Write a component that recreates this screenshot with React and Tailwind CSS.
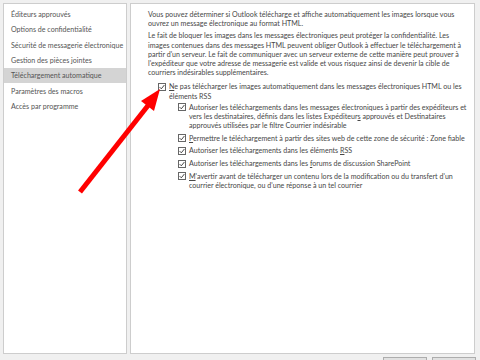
import React from "react";

const U = ({ children }) => <span className="underline underline-offset-[1px]">{children}</span>;

function Check() {
  return (
    <span className="mt-[0.6px] flex h-[8px] w-[8px] shrink-0 items-center justify-center border border-[#666] bg-white">
      <svg width="6" height="6" viewBox="0 0 6 6">
        <path d="M0.6 3.1 L2.3 4.8 L5.4 1" fill="none" stroke="#333" strokeWidth="0.9" />
      </svg>
    </span>
  );
}

function Item({ children }) {
  return (
    <div className="flex items-start gap-[3px]">
      <Check />
      <div className="whitespace-nowrap">{children}</div>
    </div>
  );
}

export default function App() {
  const nav = [
    "Éditeurs approuvés",
    "Options de confidentialité",
    "Sécurité de messagerie électronique",
    "Gestion des pièces jointes",
    "Téléchargement automatique",
    "Paramètres des macros",
    "Accès par programme",
  ];
  return (
    <div
      className="relative h-[360px] w-[480px] overflow-hidden bg-[#f0f0f0] text-[7.1px] leading-[9.2px] text-[#474747]"
      style={{ fontFamily: "Lato, 'Noto Sans', sans-serif" }}
    >
      <div className="flex h-[354px] gap-[3px] pl-[3px] pr-[5px] pt-[3px]">
        <div className="flex w-[124px] flex-col border border-[#cdcdcd] bg-white pt-[3px]">
          {nav.map((n, i) => (
            <div
              key={n}
              className={
                "flex h-[15.3px] items-center whitespace-nowrap pl-[7px] text-[#555] " +
                (i === 4 ? "bg-[#d4d4d4] text-[#333]" : "")
              }
            >
              {n}
            </div>
          ))}
        </div>
        <div className="flex flex-1 flex-col border border-[#cdcdcd] bg-white pl-[17px] pt-[6px]">
          <p className="whitespace-nowrap">
            Vous pouvez déterminer si Outlook télécharge et affiche automatiquement les images lorsque vous
            <br />
            ouvrez un message électronique au format HTML.
          </p>
          <p className="mt-[3px] whitespace-nowrap">
            Le fait de bloquer les images dans les messages électroniques peut protéger la confidentialité. Les
            <br />
            images contenues dans des messages HTML peuvent obliger Outlook à effectuer le téléchargement à
            <br />
            partir d'un serveur. Le fait de communiquer avec un serveur externe de cette manière peut prouver à
            <br />
            l'expéditeur que votre adresse de messagerie est valide et vous risquez ainsi de devenir la cible de
            <br />
            courriers indésirables supplémentaires.
          </p>
          <div className="ml-[10px] mt-[5px]">
            <Item>
              <U>N</U>e pas télécharger les images automatiquement dans les messages électroniques HTML ou les
              <br />
              éléments RSS
            </Item>
            <div className="ml-[20px] mt-[2px] flex flex-col gap-[3.4px]">
              <Item>
                Autoriser les téléchargements dans les messages électroniques à partir des expéditeurs et
                <br />
                vers les destinataires, définis dans les listes Expéditeur<U>s</U> approuvés et Destinataires
                <br />
                approuvés utilisées par le filtre Courrier indésirable
              </Item>
              <Item>
                <U>P</U>ermettre le téléchargement à partir des sites web de cette zone de sécurité : Zone fiable
              </Item>
              <Item>
                Autoriser les téléchargements dans les éléments <U>R</U>SS
              </Item>
              <Item>
                Autoriser les téléchargements dans les <U>f</U>orums de discussion SharePoint
              </Item>
              <Item>
                <U>M</U>'avertir avant de télécharger un contenu lors de la modification ou du transfert d'un
                <br />
                courrier électronique, ou d'une réponse à un tel courrier
              </Item>
            </div>
          </div>
        </div>
      </div>
      <div className="flex justify-end gap-[5px] pr-[4px] pt-[3px]">
        <div className="h-[20px] w-[44px] border border-[#adadad] bg-[#e1e1e1]" />
        <div className="h-[20px] w-[44px] border border-[#adadad] bg-[#e1e1e1]" />
      </div>
      <svg className="pointer-events-none absolute left-0 top-0" width="480" height="360">
        <line x1="80" y1="192" x2="150" y2="103" stroke="#ff0000" strokeWidth="5" />
        <polygon points="160,89 154,111 141,101" fill="#ff0000" />
      </svg>
    </div>
  );
}
